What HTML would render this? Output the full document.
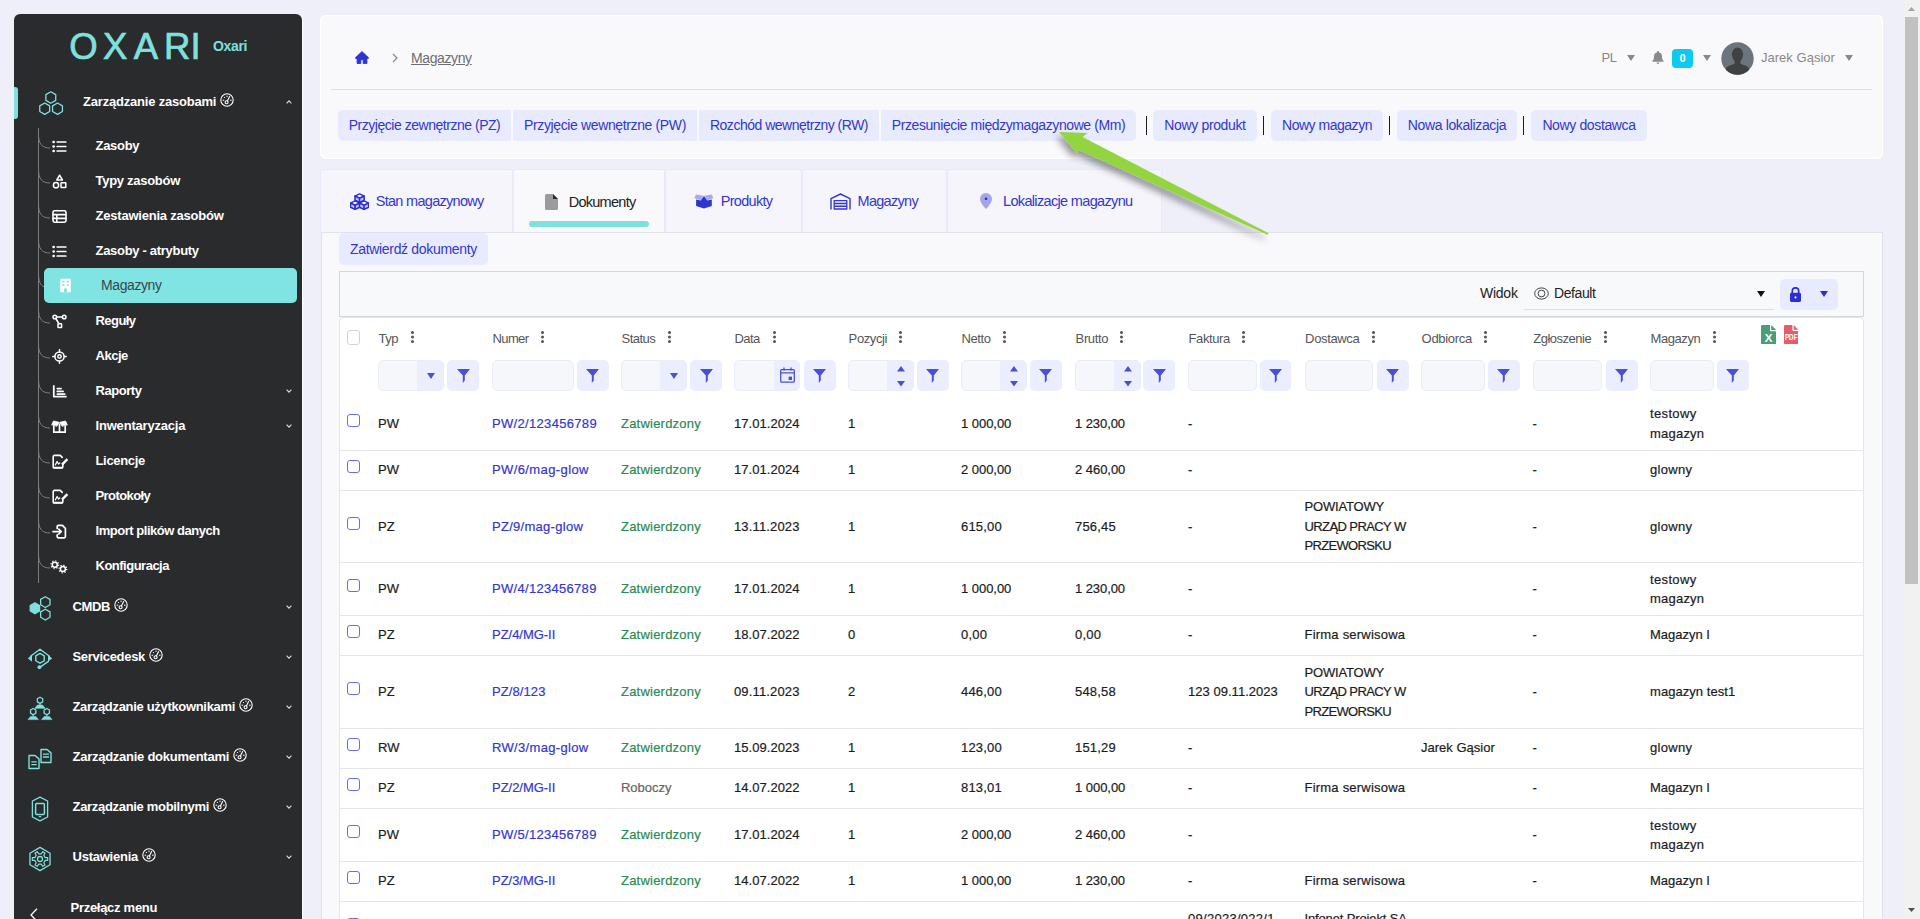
<!DOCTYPE html>
<html lang="pl">
<head>
<meta charset="utf-8">
<title>Magazyny - Oxari</title>
<style>
*{box-sizing:border-box;margin:0;padding:0}
html,body{width:1920px;height:919px;overflow:hidden}
body{background:#eeeff8;font-family:"Liberation Sans",sans-serif;font-size:13px;color:#222;position:relative}
a{text-decoration:none;color:inherit}
.abs{position:absolute}
/* ---------- sidebar ---------- */
#sidebar{position:absolute;left:14px;top:14px;width:288px;height:920px;background:#2a2b2d;border-radius:6px 6px 0 0;color:#fff;box-shadow:1px 0 0 #fff}
#logo{position:absolute;left:55px;top:15px}
#brand{position:absolute;left:199px;top:24px;font-weight:bold;font-size:14px;letter-spacing:-.35px;color:#7fe0dd;line-height:16px}
.mi{position:absolute;left:0;width:288px;height:50px}
.mi .ic{position:absolute;left:12px;top:12.5px;width:28px;height:28px}
.mi .tx{position:absolute;left:58.5px;top:16px;font-weight:bold;font-size:13px;line-height:16px;white-space:nowrap}
.mi .tx svg{vertical-align:-1px;margin-left:4px}
.mi.first .ic{left:23px;top:11.500px}.mi.first .tx{left:69px}
.mi .chev{position:absolute;left:272px;top:23px;width:6px;height:4px}
.si{position:absolute;left:30px;width:253px;height:35px}
.si .ic{position:absolute;left:8px;top:10px;width:15px;height:15px}
.si .tx{position:absolute;left:51.5px;top:9px;font-weight:bold;font-size:13px;letter-spacing:-.22px;line-height:16px;white-space:nowrap}
.si .chev{position:absolute;left:242px;top:15px;width:6px;height:4px}
.si.act{background:#80e5e2;border-radius:5px;height:35px}
.si.act .tx{font-weight:normal;color:#39474d;left:57px;font-size:14px;letter-spacing:-.4px}
.si.act .ic{left:14px}
/* ---------- top card ---------- */
#card{position:absolute;left:320px;top:15px;width:1563px;height:144px;background:#f9f9fc;border-radius:6px;box-shadow:inset 0 0 0 1px #fff}
#card .hr{position:absolute;left:11px;top:74px;width:1541px;height:1px;background:#dfe0e6}
.btn{position:absolute;top:95px;height:31px;background:#e7ebfd;color:#3437cc;font-size:14px;line-height:31px;text-align:center;white-space:nowrap;border-radius:5px;letter-spacing:-.45px}
.sep{position:absolute;top:101px;width:1px;height:19px;background:#1c1c1e}
.gray{color:#888}
/* ---------- tabs ---------- */
.tab{position:absolute;top:169px;height:64px;background:#f5f5fb;border:1px solid #e6eafb;border-bottom:none;border-radius:3px 3px 0 0;color:#3437cc;font-size:14px;letter-spacing:-.42px;white-space:nowrap}
.tab .tx{position:absolute;top:22px;line-height:18px;font-size:14.5px}
.tab svg{position:absolute}
.tab.on{background:#f9f9fc;color:#222;height:65px}
/* ---------- panel ---------- */
#panel{position:absolute;left:321px;top:232px;width:1562px;height:700px;background:#f9f9fc;border:1px solid #dfe2e8}
#tool{position:absolute;left:339px;top:271px;width:1525px;height:46px;border:1px solid #d3d7de;background:#f8f9fb}
#grid{position:absolute;left:339px;top:317px;width:1525px;height:620px;background:#fff;border:1px solid #e3e6ec;border-top:1px solid #dfe3ea;border-radius:5px 5px 0 0;overflow:hidden}
/* ---------- grid ---------- */
.th{position:absolute;top:11.5px;line-height:18px;font-size:13px;color:#55565a;letter-spacing:-.45px;white-space:nowrap}
.dots{position:absolute;top:13px;width:3px;height:3px;border-radius:50%;background:#55565a;box-shadow:0 4.5px 0 #55565a,0 9px 0 #55565a}
.cb{position:absolute;width:13px;height:13px;border:1px solid #6a6ee0;border-radius:3px;background:#fff}
.cb.hd{border-color:#cfd3dc;height:15px}
.fi{position:absolute;height:31px;background:#f6f7fb;border:1px solid #eaedf7;border-radius:5px;overflow:hidden}
.fb{position:absolute;top:-1px;right:-1px;bottom:-1px;background:#ebeefe}
.ff{position:absolute;width:31.5px;height:31px;background:#ebeefe;border-radius:5px;display:flex;align-items:center;justify-content:center}
.tr{position:absolute;left:0;width:1523px;border-bottom:1px solid #e4e6ea}
.td{position:absolute;top:0;bottom:0;display:flex;align-items:center;font-size:13px;line-height:19.5px;letter-spacing:.2px;white-space:nowrap;color:#1c1c1e;-webkit-text-stroke:.2px}
.lk{color:#3437d0}.ok{color:#2a8a55}.dr{color:#666}
/* ---------- scrollbar ---------- */
#sb{position:absolute;left:1903px;top:0;width:17px;height:919px;background:#f1f1f1}
#sb i{position:absolute;left:2px;top:17px;width:13px;height:567px;background:#c1c1c1}
</style>
</head>
<body>
<div id="sidebar">
<svg id="logo" width="140" height="34" viewBox="0 0 140 34"><text y="29.600" x="14.500 46.300 76.900 108.200 126.600" text-anchor="middle" font-family="Liberation Sans, sans-serif" font-size="36.500" fill="#7fe0dd" stroke="#7fe0dd" stroke-width=".7">OXARI</text></svg>
<div id="brand">Oxari</div>
<div class="abs" style="left:0;top:73px;width:4px;height:32px;background:#7fe0dd;border-radius:0 3px 3px 0"></div>
<svg class="abs" style="left:22px;top:112px" width="20" height="460" viewBox="0 0 20 460" fill="none" stroke="#7d7d80" stroke-width="1"><path d="M2.500 2V457"/><path d="M2.500 8C2.500 18 6 22 14 22"/><path d="M2.500 43C2.500 53 6 57 14 57"/><path d="M2.500 78C2.500 88 6 92 14 92"/><path d="M2.500 113C2.500 123 6 127 14 127"/><path d="M2.500 148C2.500 158 6 162 14 162"/><path d="M2.500 183C2.500 193 6 197 14 197"/><path d="M2.500 218C2.500 228 6 232 14 232"/><path d="M2.500 253C2.500 263 6 267 14 267"/><path d="M2.500 288C2.500 298 6 302 14 302"/><path d="M2.500 323C2.500 333 6 337 14 337"/><path d="M2.500 358C2.500 368 6 372 14 372"/><path d="M2.500 393C2.500 403 6 407 14 407"/><path d="M2.500 428C2.500 438 6 442 14 442"/></svg>
<div class="mi first" style="top:63px"><svg class="ic" viewBox="0 0 28 28" fill="none" stroke="#7fe0dd" stroke-width="1.3" stroke-linejoin="round"><polygon points="18.74,11.35 13.80,14.20 8.86,11.35 8.86,5.65 13.80,2.80 18.74,5.65"/><polygon points="12.64,22.55 7.70,25.40 2.76,22.55 2.76,16.85 7.70,14.00 12.64,16.85"/><polygon points="25.44,22.55 20.50,25.40 15.56,22.55 15.56,16.85 20.50,14.00 25.44,16.85"/></svg><span class="tx"><span style="letter-spacing:-0.20px">Zarządzanie zasobami</span><svg width="14" height="14" viewBox="0 0 14 14" fill="none" stroke="#fff" stroke-width="1.1"><circle cx="7" cy="7" r="6.2"/><circle cx="6.6" cy="9.2" r="1.5"/><path d="M7.4 8 9.6 3.6" stroke-linecap="round"/><path d="M3 7.2h.8M4.2 4.3l.5.5M7 3v.7M10.4 7.2h.8" stroke-width="1" stroke-linecap="round"/></svg></span><svg class="chev" viewBox="0 0 6 4" fill="none" stroke="#ddd" stroke-width="1.1"><path d="M.6 3.3 3 .8 5.4 3.3"/></svg></div>
<div class="mi" style="top:568px"><svg class="ic" viewBox="0 0 28 28" fill="none" stroke="#7fe0dd" stroke-width="1.3" stroke-linejoin="round"><polygon points="13.58,16.00 8.90,18.70 4.22,16.00 4.22,10.60 8.90,7.90 13.58,10.60" fill="#7fe0dd"/><polygon points="23.98,9.80 19.30,12.50 14.62,9.80 14.62,4.40 19.30,1.70 23.98,4.40"/><polygon points="23.98,22.30 19.30,25.00 14.62,22.30 14.62,16.90 19.30,14.20 23.98,16.90"/></svg><span class="tx"><span style="letter-spacing:-0.38px">CMDB</span><svg width="14" height="14" viewBox="0 0 14 14" fill="none" stroke="#fff" stroke-width="1.1"><circle cx="7" cy="7" r="6.2"/><circle cx="6.6" cy="9.2" r="1.5"/><path d="M7.4 8 9.6 3.6" stroke-linecap="round"/><path d="M3 7.2h.8M4.2 4.3l.5.5M7 3v.7M10.4 7.2h.8" stroke-width="1" stroke-linecap="round"/></svg></span><svg class="chev" viewBox="0 0 6 4" fill="none" stroke="#ddd" stroke-width="1.1"><path d="M.6.7 3 3.2 5.4.7"/></svg></div>
<div class="mi" style="top:618px"><svg class="ic" viewBox="0 0 28 28" fill="none" stroke="#7fe0dd" stroke-width="1.4" stroke-linejoin="round"><polygon points="18.24,15.75 14.00,18.20 9.76,15.75 9.76,10.85 14.00,8.40 18.24,10.85"/><path d="M4.800 12.600V11L14 4.200l9.200 6.800v1.600"/><path d="M1.800 13.300l4.200-3.400v6.800zM26.200 13.300l-4.200-3.400v6.800z" fill="#7fe0dd" stroke="none"/><path d="M22.400 16.400 14.800 21.600" stroke-linecap="round"/><circle cx="13.400" cy="22.200" r="1.900" fill="#7fe0dd" stroke="none"/></svg><span class="tx"><span style="letter-spacing:-0.31px">Servicedesk</span><svg width="14" height="14" viewBox="0 0 14 14" fill="none" stroke="#fff" stroke-width="1.1"><circle cx="7" cy="7" r="6.2"/><circle cx="6.6" cy="9.2" r="1.5"/><path d="M7.4 8 9.6 3.6" stroke-linecap="round"/><path d="M3 7.2h.8M4.2 4.3l.5.5M7 3v.7M10.4 7.2h.8" stroke-width="1" stroke-linecap="round"/></svg></span><svg class="chev" viewBox="0 0 6 4" fill="none" stroke="#ddd" stroke-width="1.1"><path d="M.6.7 3 3.2 5.4.7"/></svg></div>
<div class="mi" style="top:668px"><svg class="ic" viewBox="0 0 28 28" fill="none" stroke="#7fe0dd" stroke-width="1.3" stroke-linejoin="round"><polygon points="16.68,6.85 14.00,8.40 11.32,6.85 11.32,3.75 14.00,2.20 16.68,3.75"/><path d="M14 8.4v1.6"/><path d="M8.8 13.3l2.6-3.2h5.2l2.6 3.2z" fill="#7fe0dd" stroke-width=".6"/><polygon points="9.88,18.15 7.20,19.70 4.52,18.15 4.52,15.05 7.20,13.50 9.88,15.05"/><path d="M7.2 19.700000000000003v1.6"/><path d="M2.0 24.6l2.6-3.2h5.2l2.6 3.2z" fill="#7fe0dd" stroke-width=".6"/><polygon points="23.48,18.15 20.80,19.70 18.12,18.15 18.12,15.05 20.80,13.50 23.48,15.05"/><path d="M20.8 19.700000000000003v1.6"/><path d="M15.600000000000001 24.6l2.6-3.2h5.2l2.6 3.2z" fill="#7fe0dd" stroke-width=".6"/></svg><span class="tx"><span style="letter-spacing:-0.32px">Zarządzanie użytkownikami</span><svg width="14" height="14" viewBox="0 0 14 14" fill="none" stroke="#fff" stroke-width="1.1"><circle cx="7" cy="7" r="6.2"/><circle cx="6.6" cy="9.2" r="1.5"/><path d="M7.4 8 9.6 3.6" stroke-linecap="round"/><path d="M3 7.2h.8M4.2 4.3l.5.5M7 3v.7M10.4 7.2h.8" stroke-width="1" stroke-linecap="round"/></svg></span><svg class="chev" viewBox="0 0 6 4" fill="none" stroke="#ddd" stroke-width="1.1"><path d="M.6.7 3 3.2 5.4.7"/></svg></div>
<div class="mi" style="top:718px"><svg class="ic" viewBox="0 0 28 28" fill="none" stroke="#7fe0dd" stroke-width="1.4" stroke-linejoin="round"><path d="M15 4.5h6l4 3.4v9.6h-10z"/><path d="M3 10.5h6l4 3.4v9.6H3z"/><path d="M17 9.2h6M17 12h6M5.3 16.8h5.4M5.3 19.6h5.4" stroke-width="1.3"/></svg><span class="tx"><span style="letter-spacing:-0.26px">Zarządzanie dokumentami</span><svg width="14" height="14" viewBox="0 0 14 14" fill="none" stroke="#fff" stroke-width="1.1"><circle cx="7" cy="7" r="6.2"/><circle cx="6.6" cy="9.2" r="1.5"/><path d="M7.4 8 9.6 3.6" stroke-linecap="round"/><path d="M3 7.2h.8M4.2 4.3l.5.5M7 3v.7M10.4 7.2h.8" stroke-width="1" stroke-linecap="round"/></svg></span><svg class="chev" viewBox="0 0 6 4" fill="none" stroke="#ddd" stroke-width="1.1"><path d="M.6.7 3 3.2 5.4.7"/></svg></div>
<div class="mi" style="top:768px"><svg class="ic" viewBox="0 0 28 28" fill="none" stroke="#7fe0dd" stroke-width="1.3" stroke-linejoin="round"><path d="M14 2.2 21.6 6v16L14 25.8 6.4 22V6z"/><rect x="9.6" y="8.4" width="8.8" height="11" rx="1" stroke-width="1.5"/><path d="M12.8 21.6h2.4" stroke-width="1.2"/></svg><span class="tx"><span style="letter-spacing:-0.31px">Zarządzanie mobilnymi</span><svg width="14" height="14" viewBox="0 0 14 14" fill="none" stroke="#fff" stroke-width="1.1"><circle cx="7" cy="7" r="6.2"/><circle cx="6.6" cy="9.2" r="1.5"/><path d="M7.4 8 9.6 3.6" stroke-linecap="round"/><path d="M3 7.2h.8M4.2 4.3l.5.5M7 3v.7M10.4 7.2h.8" stroke-width="1" stroke-linecap="round"/></svg></span><svg class="chev" viewBox="0 0 6 4" fill="none" stroke="#ddd" stroke-width="1.1"><path d="M.6.7 3 3.2 5.4.7"/></svg></div>
<div class="mi" style="top:818px"><svg class="ic" viewBox="0 0 28 28" fill="none" stroke="#7fe0dd" stroke-width="1.3" stroke-linejoin="round"><polygon points="24.05,19.80 14.00,25.60 3.95,19.80 3.95,8.20 14.00,2.40 24.05,8.20"/><polygon points="19.22,12.60 21.69,12.70 21.69,15.30 19.22,15.40 17.82,17.82 18.97,20.01 16.72,21.31 15.40,19.22 12.60,19.22 11.28,21.31 9.03,20.01 10.18,17.82 8.78,15.40 6.31,15.30 6.31,12.70 8.78,12.60 10.18,10.18 9.03,7.99 11.28,6.69 12.60,8.78 15.40,8.78 16.72,6.69 18.97,7.99 17.82,10.18" stroke-width="1.2"/><circle cx="14" cy="14" r="2.5"/></svg><span class="tx"><span style="letter-spacing:-0.24px">Ustawienia</span><svg width="14" height="14" viewBox="0 0 14 14" fill="none" stroke="#fff" stroke-width="1.1"><circle cx="7" cy="7" r="6.2"/><circle cx="6.6" cy="9.2" r="1.5"/><path d="M7.4 8 9.6 3.6" stroke-linecap="round"/><path d="M3 7.2h.8M4.2 4.3l.5.5M7 3v.7M10.4 7.2h.8" stroke-width="1" stroke-linecap="round"/></svg></span><svg class="chev" viewBox="0 0 6 4" fill="none" stroke="#ddd" stroke-width="1.1"><path d="M.6.7 3 3.2 5.4.7"/></svg></div>
<div class="si" style="top:114.5px"><svg class="ic" viewBox="0 0 15 15" fill="none" stroke="#fff" stroke-width="1.7" stroke-linecap="round" stroke-linejoin="round"><path d="M5.2 3h8.6M5.2 7.5h8.6M5.2 12h8.6"/><path d="M1.6 3h.1M1.6 7.5h.1M1.6 12h.1" stroke-width="2.6"/></svg><span class="tx" style="letter-spacing:-0.29px">Zasoby</span></div>
<div class="si" style="top:149.5px"><svg class="ic" viewBox="0 0 15 15" fill="none" stroke="#fff" stroke-width="1.7" stroke-linecap="round" stroke-linejoin="round" style="stroke-width:1.5"><path d="M7.6 1.2 10.4 6H4.8z"/><circle cx="4" cy="11.2" r="2.6"/><rect x="9" y="8.8" width="4.8" height="4.8" rx=".5"/></svg><span class="tx" style="letter-spacing:-0.28px">Typy zasobów</span></div>
<div class="si" style="top:184.5px"><svg class="ic" viewBox="0 0 15 15" fill="none" stroke="#fff" stroke-width="1.7" stroke-linecap="round" stroke-linejoin="round" style="stroke-width:1.6"><rect x="1" y="1.8" width="13" height="11.4" rx="1.6"/><path d="M1 5.6h13M1 9.4h13M4.8 5.6v7.6"/></svg><span class="tx" style="letter-spacing:-0.21px">Zestawienia zasobów</span></div>
<div class="si" style="top:219.5px"><svg class="ic" viewBox="0 0 15 15" fill="none" stroke="#fff" stroke-width="1.7" stroke-linecap="round" stroke-linejoin="round"><path d="M5.2 3h8.6M5.2 7.5h8.6M5.2 12h8.6"/><path d="M1.6 3h.1M1.6 7.5h.1M1.6 12h.1" stroke-width="2.6"/></svg><span class="tx" style="letter-spacing:-0.30px">Zasoby - atrybuty</span></div>
<div class="si act" style="top:254px"><svg class="ic" viewBox="0 0 15 15" fill="#fff"><path d="M3.2.8h8.6a1 1 0 0 1 1 1v12.4H2.200V1.800a1 1 0 0 1 1-1z"/><g fill="#80e5e2"><rect x="4.400" y="2.800" width="1.900" height="1.900"/><rect x="8.700" y="2.800" width="1.900" height="1.900"/><rect x="4.400" y="6.200" width="1.900" height="1.900"/><rect x="8.700" y="6.200" width="1.900" height="1.900"/><path d="M6 14.200v-3l1.500-1.600L9 11.200v3z"/></g></svg><span class="tx" style="letter-spacing:-0.41px">Magazyny</span></div>
<div class="si" style="top:289.5px"><svg class="ic" viewBox="0 0 15 15" fill="none" stroke="#fff" stroke-width="1.7" stroke-linecap="round" stroke-linejoin="round" style="stroke-width:1.5"><circle cx="2.800" cy="3" r="1.800"/><circle cx="12.200" cy="3" r="1.800"/><rect x="6" y="9.800" width="3.600" height="3.600" rx=".5"/><path d="M4.600 3h5.800M3.800 4.500l3 5"/></svg><span class="tx" style="letter-spacing:-0.56px">Reguły</span></div>
<div class="si" style="top:324.5px"><svg class="ic" viewBox="0 0 15 15" fill="none" stroke="#fff" stroke-width="1.7" stroke-linecap="round" stroke-linejoin="round" style="stroke-width:1.5"><circle cx="7.500" cy="7.500" r="4.600"/><circle cx="7.500" cy="7.500" r="1.700"/><path d="M7.500.8v2M7.500 12.200v2M.8 7.500h2M12.200 7.500h2"/></svg><span class="tx" style="letter-spacing:-0.46px">Akcje</span></div>
<div class="si" style="top:359.5px"><svg class="ic" viewBox="0 0 15 15" fill="none" stroke="#fff" stroke-width="1.7" stroke-linecap="round" stroke-linejoin="round" style="stroke-width:1.8"><path d="M1.800 2v10.600h12.200"/><path d="M5.200 4.600h4M5.200 7.400h6M5.200 10.100h7.600" stroke-width="1.600"/></svg><span class="tx" style="letter-spacing:-0.45px">Raporty</span><svg class="chev" viewBox="0 0 6 4" fill="none" stroke="#ddd" stroke-width="1.1"><path d="M.6.7 3 3.2 5.4.7"/></svg></div>
<div class="si" style="top:394.5px"><svg class="ic" viewBox="0 0 17 15" fill="none" stroke="#fff" stroke-width="1.7" stroke-linecap="round" stroke-linejoin="round" style="stroke-width:1.700;width:17px;left:7px"><path d="M.8 5.600 2.500 2l5.700 1.300L6 7zM16.200 5.600 14.500 2 8.800 3.300 11 7z" fill="#fff" stroke-width=".8"/><path d="M2.800 7.400v5.800h11.400V7.400M8.500 5v8"/></svg><span class="tx" style="letter-spacing:-0.19px">Inwentaryzacja</span><svg class="chev" viewBox="0 0 6 4" fill="none" stroke="#ddd" stroke-width="1.1"><path d="M.6.7 3 3.2 5.4.7"/></svg></div>
<div class="si" style="top:429.5px"><svg class="ic" viewBox="0 0 17 15" fill="none" stroke="#fff" stroke-width="1.7" stroke-linecap="round" stroke-linejoin="round" style="stroke-width:1.600;width:17px"><path d="M10.800 10.600v2.200a1.200 1.200 0 0 1-1.200 1.200H2.400a1.200 1.200 0 0 1-1.200-1.200V2.600a1.200 1.200 0 0 1 1.200-1.200h5.800l2 2"/><path d="M3.400 10.800l1.700-3.300 1.400 2.500 1.200-1" stroke-width="1.300"/><path d="M15.400 5.200 10 10.600" stroke-width="2.400" stroke-linecap="butt"/><path d="M1.600 13.600h8.800" stroke-width="1.800"/></svg><span class="tx" style="letter-spacing:-0.33px">Licencje</span></div>
<div class="si" style="top:464.5px"><svg class="ic" viewBox="0 0 17 15" fill="none" stroke="#fff" stroke-width="1.7" stroke-linecap="round" stroke-linejoin="round" style="stroke-width:1.600;width:17px"><path d="M10.800 10.600v2.200a1.200 1.200 0 0 1-1.200 1.200H2.400a1.200 1.200 0 0 1-1.200-1.200V2.600a1.200 1.200 0 0 1 1.200-1.200h5.800l2 2"/><path d="M3.400 10.800l1.700-3.300 1.400 2.500 1.200-1" stroke-width="1.300"/><path d="M15.400 5.200 10 10.600" stroke-width="2.400" stroke-linecap="butt"/><path d="M1.600 13.600h8.800" stroke-width="1.800"/></svg><span class="tx" style="letter-spacing:-0.59px">Protokoły</span></div>
<div class="si" style="top:499.5px"><svg class="ic" viewBox="0 0 15 15" fill="none" stroke="#fff" stroke-width="1.7" stroke-linecap="round" stroke-linejoin="round" style="stroke-width:1.700"><path d="M5.200 4.400V2.600a1.200 1.200 0 0 1 1.200-1.200h4l3 3v8.200a1.200 1.200 0 0 1-1.200 1.200H6.400a1.200 1.200 0 0 1-1.200-1.200v-1.800"/><path d="M1 7.600h8M6.800 5.200l2.400 2.400-2.400 2.400"/></svg><span class="tx" style="letter-spacing:-0.47px">Import plików danych</span></div>
<div class="si" style="top:534.5px"><svg class="ic" viewBox="0 0 17 15" fill="none" stroke="#fff" style="width:17px;left:7px;overflow:visible"><circle cx="3.8" cy="5.7" r="2.500" stroke-width="1.500"/><circle cx="3.8" cy="5.7" r="3.800" stroke-dasharray="1.200 1.784" stroke-width="1.300"/><circle cx="11.9" cy="10" r="2.500" stroke-width="1.500"/><circle cx="11.9" cy="10" r="3.800" stroke-dasharray="1.200 1.784" stroke-width="1.300"/></svg><span class="tx" style="letter-spacing:-0.50px">Konfiguracja</span></div>
<div class="mi" style="top:868px"><svg class="abs" style="left:16px;top:26px" width="8" height="14" viewBox="0 0 8 14" fill="none" stroke="#fff" stroke-width="1.300"><path d="M7 .8 1 7l6 6.200"/></svg><span class="tx" style="left:56.500px;top:18px;letter-spacing:-0.28px">Przełącz menu</span></div>
</div>
<div id="card">
<svg class="abs" style="left:35px;top:36px" width="14" height="13.400" viewBox="0 0 14 13.400"><path d="M7 .6 13.400 6.600v.8h-1.500v5.200H8.200V8.700H5.800v3.900H2.100V7.400H.6v-.8z" fill="#2b35d2" stroke="#2b35d2" stroke-width=".9" stroke-linejoin="round"/></svg>
<svg class="abs" style="left:72px;top:38px" width="6" height="10" viewBox="0 0 6 10" fill="none" stroke="#888" stroke-width="1.200"><path d="M1 1l4 4-4 4"/></svg>
<a class="abs" style="left:91px;top:34px;font-size:14px;letter-spacing:-0.39px;line-height:18px;color:#6c6c72;text-decoration:underline">Magazyny</a>
<span class="abs gray" style="left:1281.5px;top:34px;font-size:13px;line-height:18px;letter-spacing:-.3px">PL</span>
<svg class="abs" style="left:1307px;top:40px" width="8" height="6" viewBox="0 0 8 6"><path d="M0 0h8L4 6z" fill="#888"/></svg>
<svg class="abs" style="left:1332px;top:36px" width="12" height="13" viewBox="0 0 12 13" fill="#8a8a8e"><path d="M6 0a1 1 0 0 1 1 1v.4a4 4 0 0 1 3 3.900c0 2.700.6 3.800 1.600 4.700.3.300.1.800-.3.800H.7c-.4 0-.6-.5-.3-.8C1.400 9.100 2 8 2 5.300a4 4 0 0 1 3-3.900V1a1 1 0 0 1 1-1zM4.600 11.600h2.800a1.400 1.400 0 0 1-2.800 0z"/></svg>
<span class="abs" style="left:1352px;top:34px;width:21px;height:19px;background:#0dcaf0;border-radius:4px;color:#fff;font-weight:bold;font-size:11px;line-height:19px;text-align:center">0</span>
<svg class="abs" style="left:1383px;top:40px" width="8" height="6" viewBox="0 0 8 6"><path d="M0 0h8L4 6z" fill="#888"/></svg>
<svg class="abs" style="left:1401px;top:27px" width="33" height="33" viewBox="0 0 33 33"><defs><clipPath id="av"><circle cx="16.500" cy="16.500" r="16.200"/></clipPath></defs><circle cx="16.500" cy="16.500" r="16.200" fill="#6c757d"/><g clip-path="url(#av)" fill="#404142"><ellipse cx="16.500" cy="12.600" rx="5.600" ry="7.200"/><path d="M13.500 17.500h6v4.200c3 1.200 7 2.300 8.500 4.300v7H5v-7c1.500-2 5.500-3.100 8.500-4.300z"/></g></svg>
<span class="abs gray" style="left:1441px;top:34px;font-size:13px;line-height:18px;letter-spacing:0.02px;white-space:nowrap">Jarek Gąsior</span>
<svg class="abs" style="left:1525px;top:40px" width="8" height="6" viewBox="0 0 8 6"><path d="M0 0h8L4 6z" fill="#888"/></svg>
<div class="hr"></div>
<a class="btn" style="left:18px;width:173px;border-radius:5px 0 0 5px;letter-spacing:-0.47px">Przyjęcie zewnętrzne (PZ)</a>
<a class="btn" style="left:193px;width:184px;border-radius:0;letter-spacing:-0.37px">Przyjęcie wewnętrzne (PW)</a>
<a class="btn" style="left:379px;width:180px;border-radius:0;letter-spacing:-0.49px">Rozchód wewnętrzny (RW)</a>
<a class="btn" style="left:561px;width:255px;border-radius:0 5px 5px 0;letter-spacing:-0.41px">Przesunięcie międzymagazynowe (Mm)</a>
<i class="sep" style="left:826px"></i>
<a class="btn" style="left:833px;width:104px;letter-spacing:-0.36px">Nowy produkt</a>
<i class="sep" style="left:943px"></i>
<a class="btn" style="left:951px;width:112px;letter-spacing:-0.48px">Nowy magazyn</a>
<i class="sep" style="left:1069px"></i>
<a class="btn" style="left:1077px;width:120px;letter-spacing:-0.37px">Nowa lokalizacja</a>
<i class="sep" style="left:1203px"></i>
<a class="btn" style="left:1211px;width:116px;letter-spacing:-0.37px">Nowy dostawca</a>
</div>
<div class="tab" style="left:320px;width:193px">
<svg style="left:28.500px;top:22.500px" width="19" height="17" viewBox="0 0 19 17" fill="#c3c6f5" stroke="#2c2fd0" stroke-width="1.500" stroke-linejoin="round"><path d="M9.6 0.9 14.2 3.1 9.6 5.3 5.0 3.1z" fill="#fff"/><path d="M5.0 3.1 9.6 5.3V9.4L5.0 7.2z"/><path d="M14.2 3.1 9.6 5.3V9.4L14.2 7.2z"/><path d="M5.1 7.9 9.7 10.1 5.1 12.3 0.5 10.1z" fill="#fff"/><path d="M0.5 10.1 5.1 12.3V16.4L0.5 14.2z"/><path d="M9.7 10.1 5.1 12.3V16.4L9.7 14.2z"/><path d="M14.1 7.9 18.7 10.1 14.1 12.3 9.5 10.1z" fill="#fff"/><path d="M9.5 10.1 14.1 12.3V16.4L9.5 14.2z"/><path d="M18.7 10.1 14.1 12.3V16.4L18.7 14.2z"/></svg>
<span class="tx" style="left:54.7px;letter-spacing:-0.70px">Stan magazynowy</span></div>
<div class="tab on" style="left:513px;width:152px">
<svg style="left:31px;top:24px" width="13" height="16" viewBox="0 0 13 16"><path d="M1.600 0H8l5 5v9.400A1.600 1.600 0 0 1 11.400 16H1.600A1.600 1.600 0 0 1 0 14.400V1.600A1.600 1.600 0 0 1 1.600 0z" fill="#9b9b9e"/><path d="M8 0l5 5H8z" fill="#2a2a2c"/></svg>
<span class="tx" style="left:54.7px;top:23px;letter-spacing:-0.73px">Dokumenty</span>
<i class="abs" style="left:15px;top:51px;width:120px;height:6px;border-radius:3px;background:#80e0dc"></i></div>
<div class="tab" style="left:665px;width:137px">
<svg style="left:28px;top:23.500px" width="20" height="15" viewBox="0 0 20 15"><path d="M.3 3.900 2.100.5l7.400 1.300-2.800 4.400zM19.300 3.900 17.800.5l-7.500 1.300 2.900 4.400z" fill="#a6a9ea"/><path d="M2.100 5.500l4.600 1L10 2l3.200 4.500 4.600-1v6.600L10 14.400l-7.900-2.300z" fill="#2b36d1"/></svg>
<span class="tx" style="left:54.7px;letter-spacing:-0.69px">Produkty</span></div>
<div class="tab" style="left:802px;width:145px">
<svg style="left:27px;top:23px" width="21" height="17" viewBox="0 0 21 17" fill="none" stroke="#3437cc" stroke-width="1.400" stroke-linejoin="round"><path d="M1 16.500V5.600L10.500 1 20 5.600v10.900"/><path d="M4.200 16.500V7.600h12.600v8.900" stroke-width="1.300"/><path d="M4.200 10.400h12.600M4.200 13.200h12.600M4.200 16h12.600" stroke-width="1.500"/></svg>
<span class="tx" style="left:54.5px;letter-spacing:-0.70px">Magazyny</span></div>
<div class="tab" style="left:947px;width:215px">
<svg style="left:32px;top:23px" width="12" height="16" viewBox="0 0 12 16"><path d="M6 0a6 6 0 0 1 6 6c0 4-6 10-6 10S0 10 0 6a6 6 0 0 1 6-6z" fill="#a3a6ea"/><circle cx="6" cy="5.800" r="1.300" fill="#2a2db8"/></svg>
<span class="tx" style="left:55px;letter-spacing:-0.66px">Lokalizacje magazynu</span></div>
<div id="panel"></div>
<a class="btn" style="left:339px;top:233px;width:149px;height:32px;line-height:32px;letter-spacing:-0.32px">Zatwierdź dokumenty</a>
<div id="tool">
<span class="abs" style="left:1140px;top:12px;font-size:14px;line-height:18px;letter-spacing:-.25px">Widok</span>
<i class="abs" style="left:1184px;top:37px;width:250px;height:1px;background:#dcdfe6"></i>
<svg class="abs" style="left:1194px;top:15px" width="15" height="13" viewBox="0 0 15 13" fill="none" stroke="#444" stroke-width="1"><ellipse cx="7.500" cy="6.500" rx="6.800" ry="5.600"/><circle cx="7.500" cy="6.500" r="3.400"/></svg>
<span class="abs" style="left:1214px;top:12px;font-size:14px;line-height:18px;letter-spacing:-.4px">Default</span>
<svg class="abs" style="left:1417px;top:19px" width="8" height="6" viewBox="0 0 8 6"><path d="M0 0h8L4 6z" fill="#111"/></svg>
<div class="abs" style="left:1440px;top:7px;width:58px;height:31px;background:#e7ebfd;border-radius:5px"><svg class="abs" style="left:10px;top:8px" width="11" height="15" viewBox="0 0 11 15"><path d="M2.300 6V4a3.200 3.200 0 0 1 6.400 0v2" fill="none" stroke="#2b2fd2" stroke-width="1.700"/><rect x="0" y="5.800" width="11" height="9.200" rx="1.400" fill="#2b2fd2"/><circle cx="5.500" cy="10.400" r="1.100" fill="#e7ebfd"/></svg><svg class="abs" style="left:40px;top:12px" width="8" height="6" viewBox="0 0 8 6"><path d="M0 0h8L4 6z" fill="#2b2fd2"/></svg></div>
</div>
<div id="grid">
<i class="cb hd" style="left:7px;top:11.5px"></i>
<span class="th" style="left:38.6px;letter-spacing:-0.59px">Typ</span><i class="dots" style="left:71px"></i>
<div class="fi" style="left:38px;top:42px;width:66px"><i class="fb" style="left:38px"></i>
<svg class="abs" style="left:48px;top:12px" width="8" height="6" viewBox="0 0 8 6"><path d="M0 0h8L4 6z" fill="#4a50d6"/></svg>
</div>
<div class="ff" style="left:107.3px;top:42px"><svg width="13" height="14" viewBox="0 0 13 14"><path d="M0 0h13L7.800 6.400v5.200L5.800 14V6.400z" fill="#4a50d6"/></svg></div>
<span class="th" style="left:152.6px;letter-spacing:-0.64px">Numer</span><i class="dots" style="left:200.8px"></i>
<div class="fi" style="left:152px;top:42px;width:82px"></div>
<div class="ff" style="left:237.2px;top:42px"><svg width="13" height="14" viewBox="0 0 13 14"><path d="M0 0h13L7.800 6.400v5.200L5.800 14V6.400z" fill="#4a50d6"/></svg></div>
<span class="th" style="left:281.6px;letter-spacing:-0.53px">Status</span><i class="dots" style="left:327.9px"></i>
<div class="fi" style="left:281px;top:42px;width:66px"><i class="fb" style="left:38px"></i>
<svg class="abs" style="left:48px;top:12px" width="8" height="6" viewBox="0 0 8 6"><path d="M0 0h8L4 6z" fill="#4a50d6"/></svg>
</div>
<div class="ff" style="left:350.3px;top:42px"><svg width="13" height="14" viewBox="0 0 13 14"><path d="M0 0h13L7.800 6.400v5.200L5.800 14V6.400z" fill="#4a50d6"/></svg></div>
<span class="th" style="left:394.6px;letter-spacing:-0.62px">Data</span><i class="dots" style="left:433.1px"></i>
<div class="fi" style="left:394px;top:42px;width:66px"><i class="fb" style="left:39px"></i>
<svg class="abs" style="left:45px;top:6px" width="15" height="16" viewBox="0 0 15 16" fill="none" stroke="#4a50d6" stroke-width="1.300"><rect x=".7" y="2.600" width="13.600" height="12.600" rx="1"/><path d="M.7 5.800h13.600M4 .4v3M11 .4v3"/><rect x="8.600" y="9.600" width="3.400" height="3.400" fill="#4a50d6" stroke="none"/></svg>
</div>
<div class="ff" style="left:464px;top:42px"><svg width="13" height="14" viewBox="0 0 13 14"><path d="M0 0h13L7.800 6.400v5.200L5.800 14V6.400z" fill="#4a50d6"/></svg></div>
<span class="th" style="left:508.6px;letter-spacing:-0.38px">Pozycji</span><i class="dots" style="left:559.1px"></i>
<div class="fi" style="left:508px;top:42px;width:66px"><i class="fb" style="left:38px"></i>
<svg class="abs" style="left:48px;top:5px" width="8" height="21" viewBox="0 0 8 21"><path d="M0 5.500h8L4 0zM0 15h8l-4 5.500z" fill="#4a50d6"/></svg>
</div>
<div class="ff" style="left:577px;top:42px"><svg width="13" height="14" viewBox="0 0 13 14"><path d="M0 0h13L7.800 6.400v5.200L5.800 14V6.400z" fill="#4a50d6"/></svg></div>
<span class="th" style="left:621.6px;letter-spacing:-0.42px">Netto</span><i class="dots" style="left:662.9px"></i>
<div class="fi" style="left:621px;top:42px;width:66px"><i class="fb" style="left:38px"></i>
<svg class="abs" style="left:48px;top:5px" width="8" height="21" viewBox="0 0 8 21"><path d="M0 5.500h8L4 0zM0 15h8l-4 5.500z" fill="#4a50d6"/></svg>
</div>
<div class="ff" style="left:690.2px;top:42px"><svg width="13" height="14" viewBox="0 0 13 14"><path d="M0 0h13L7.800 6.400v5.200L5.800 14V6.400z" fill="#4a50d6"/></svg></div>
<span class="th" style="left:735.6px;letter-spacing:-0.38px">Brutto</span><i class="dots" style="left:780px"></i>
<div class="fi" style="left:735px;top:42px;width:66px"><i class="fb" style="left:38px"></i>
<svg class="abs" style="left:48px;top:5px" width="8" height="21" viewBox="0 0 8 21"><path d="M0 5.500h8L4 0zM0 15h8l-4 5.500z" fill="#4a50d6"/></svg>
</div>
<div class="ff" style="left:803.3px;top:42px"><svg width="13" height="14" viewBox="0 0 13 14"><path d="M0 0h13L7.800 6.400v5.200L5.800 14V6.400z" fill="#4a50d6"/></svg></div>
<span class="th" style="left:848.6px;letter-spacing:-0.41px">Faktura</span><i class="dots" style="left:901.8px"></i>
<div class="fi" style="left:848px;top:42px;width:69px"></div>
<div class="ff" style="left:919.8px;top:42px"><svg width="13" height="14" viewBox="0 0 13 14"><path d="M0 0h13L7.800 6.400v5.200L5.800 14V6.400z" fill="#4a50d6"/></svg></div>
<span class="th" style="left:965.1px;letter-spacing:-0.35px">Dostawca</span><i class="dots" style="left:1032px"></i>
<div class="fi" style="left:964.5px;top:42px;width:68.5px"></div>
<div class="ff" style="left:1037px;top:42px"><svg width="13" height="14" viewBox="0 0 13 14"><path d="M0 0h13L7.800 6.400v5.200L5.800 14V6.400z" fill="#4a50d6"/></svg></div>
<span class="th" style="left:1081.6px;letter-spacing:-0.31px">Odbiorca</span><i class="dots" style="left:1144px"></i>
<div class="fi" style="left:1081px;top:42px;width:63.5px"></div>
<div class="ff" style="left:1148px;top:42px"><svg width="13" height="14" viewBox="0 0 13 14"><path d="M0 0h13L7.800 6.400v5.200L5.800 14V6.400z" fill="#4a50d6"/></svg></div>
<span class="th" style="left:1193.2px;letter-spacing:-0.49px">Zgłoszenie</span><i class="dots" style="left:1264px"></i>
<div class="fi" style="left:1192.6px;top:42px;width:69.5px"></div>
<div class="ff" style="left:1266px;top:42px"><svg width="13" height="14" viewBox="0 0 13 14"><path d="M0 0h13L7.800 6.400v5.200L5.800 14V6.400z" fill="#4a50d6"/></svg></div>
<span class="th" style="left:1310.6px;letter-spacing:-0.44px">Magazyn</span><i class="dots" style="left:1372.9px"></i>
<div class="fi" style="left:1310px;top:42px;width:64px"></div>
<div class="ff" style="left:1377px;top:42px"><svg width="13" height="14" viewBox="0 0 13 14"><path d="M0 0h13L7.800 6.400v5.200L5.800 14V6.400z" fill="#4a50d6"/></svg></div>
<svg class="abs" style="left:1421px;top:7px" width="15.200" height="19.400" viewBox="0 0 15.200 19.400"><path d="M1.400 0H9v5.200a1 1 0 0 0 1 1h5.200v11.800a1.400 1.400 0 0 1-1.400 1.400H1.400A1.400 1.400 0 0 1 0 18V1.400A1.400 1.400 0 0 1 1.400 0z" fill="#4a9e76"/><path d="M10.200 0l5 5h-5z" fill="#4a9e76"/><text x="7.600" y="17" font-family="Liberation Sans, sans-serif" font-weight="bold" font-size="11.500" fill="#fff" text-anchor="middle">X</text></svg>
<svg class="abs" style="left:1443.7px;top:7px" width="14.400" height="19.400" viewBox="0 0 14.400 19.400"><path d="M1.400 0H8.400v5a1 1 0 0 0 1 1h5v12a1.400 1.400 0 0 1-1.400 1.400H1.400A1.400 1.400 0 0 1 0 18V1.400A1.400 1.400 0 0 1 1.400 0z" fill="#e35d6b"/><path d="M9.600 0l4.800 4.800H9.600z" fill="#e35d6b"/><text x="7.200" y="14.800" font-family="Liberation Sans, sans-serif" font-weight="bold" font-size="9" fill="#fff" text-anchor="middle" textLength="12.600" lengthAdjust="spacingAndGlyphs">PDF</text></svg>
<div class="tr" style="top:79px;height:54px">
<i class="cb" style="left:7px;top:16.5px"></i>
<div class="td" style="left:38px"><div>PW</div></div>
<div class="td" style="left:152px"><div><a class="lk"><span style="letter-spacing:0.32px">PW/2/123456789</span></a></div></div>
<div class="td" style="left:281px"><div><span class="ok"><span style="letter-spacing:0.22px">Zatwierdzony</span></span></div></div>
<div class="td" style="left:394px"><div><span style="letter-spacing:0.04px">17.01.2024</span></div></div>
<div class="td" style="left:508px"><div>1</div></div>
<div class="td" style="left:621px"><div><span style="letter-spacing:-0.04px">1 000,00</span></div></div>
<div class="td" style="left:735px"><div><span style="letter-spacing:-0.08px">1 230,00</span></div></div>
<div class="td" style="left:848px"><div>-</div></div>
<div class="td" style="left:1192.6px"><div>-</div></div>
<div class="td" style="left:1310px"><div><span style="letter-spacing:0.35px">testowy</span><br><span style="letter-spacing:0.22px">magazyn</span></div></div>
</div>
<div class="tr" style="top:133px;height:40px">
<i class="cb" style="left:7px;top:8.5px"></i>
<div class="td" style="left:38px;padding-bottom:1.5px"><div>PW</div></div>
<div class="td" style="left:152px;padding-bottom:1.5px"><div><a class="lk"><span style="letter-spacing:0.39px">PW/6/mag-glow</span></a></div></div>
<div class="td" style="left:281px;padding-bottom:1.5px"><div><span class="ok"><span style="letter-spacing:0.22px">Zatwierdzony</span></span></div></div>
<div class="td" style="left:394px;padding-bottom:1.5px"><div><span style="letter-spacing:0.04px">17.01.2024</span></div></div>
<div class="td" style="left:508px;padding-bottom:1.5px"><div>1</div></div>
<div class="td" style="left:621px;padding-bottom:1.5px"><div><span style="letter-spacing:-0.04px">2 000,00</span></div></div>
<div class="td" style="left:735px;padding-bottom:1.5px"><div><span style="letter-spacing:-0.04px">2 460,00</span></div></div>
<div class="td" style="left:848px;padding-bottom:1.5px"><div>-</div></div>
<div class="td" style="left:1192.6px;padding-bottom:1.5px"><div>-</div></div>
<div class="td" style="left:1310px;padding-bottom:1.5px"><div><span style="letter-spacing:0.29px">glowny</span></div></div>
</div>
<div class="tr" style="top:173px;height:72px">
<i class="cb" style="left:7px;top:25.5px"></i>
<div class="td" style="left:38px"><div>PZ</div></div>
<div class="td" style="left:152px"><div><a class="lk"><span style="letter-spacing:0.28px">PZ/9/mag-glow</span></a></div></div>
<div class="td" style="left:281px"><div><span class="ok"><span style="letter-spacing:0.22px">Zatwierdzony</span></span></div></div>
<div class="td" style="left:394px"><div><span style="letter-spacing:0.14px">13.11.2023</span></div></div>
<div class="td" style="left:508px"><div>1</div></div>
<div class="td" style="left:621px"><div>615,00</div></div>
<div class="td" style="left:735px"><div>756,45</div></div>
<div class="td" style="left:848px"><div>-</div></div>
<div class="td" style="left:964.5px"><div><span style="letter-spacing:-0.17px">POWIATOWY</span><br><span style="letter-spacing:-0.59px">URZĄD PRACY W</span><br><span style="letter-spacing:-0.68px">PRZEWORSKU</span></div></div>
<div class="td" style="left:1192.6px"><div>-</div></div>
<div class="td" style="left:1310px"><div><span style="letter-spacing:0.29px">glowny</span></div></div>
</div>
<div class="tr" style="top:245px;height:53px">
<i class="cb" style="left:7px;top:16px"></i>
<div class="td" style="left:38px"><div>PW</div></div>
<div class="td" style="left:152px"><div><a class="lk"><span style="letter-spacing:0.30px">PW/4/123456789</span></a></div></div>
<div class="td" style="left:281px"><div><span class="ok"><span style="letter-spacing:0.22px">Zatwierdzony</span></span></div></div>
<div class="td" style="left:394px"><div><span style="letter-spacing:0.04px">17.01.2024</span></div></div>
<div class="td" style="left:508px"><div>1</div></div>
<div class="td" style="left:621px"><div><span style="letter-spacing:-0.04px">1 000,00</span></div></div>
<div class="td" style="left:735px"><div><span style="letter-spacing:-0.08px">1 230,00</span></div></div>
<div class="td" style="left:848px"><div>-</div></div>
<div class="td" style="left:1192.6px"><div>-</div></div>
<div class="td" style="left:1310px"><div><span style="letter-spacing:0.35px">testowy</span><br><span style="letter-spacing:0.22px">magazyn</span></div></div>
</div>
<div class="tr" style="top:298px;height:40px">
<i class="cb" style="left:7px;top:8.5px"></i>
<div class="td" style="left:38px;padding-bottom:1.5px"><div>PZ</div></div>
<div class="td" style="left:152px;padding-bottom:1.5px"><div><a class="lk"><span style="letter-spacing:-0.03px">PZ/4/MG-II</span></a></div></div>
<div class="td" style="left:281px;padding-bottom:1.5px"><div><span class="ok"><span style="letter-spacing:0.22px">Zatwierdzony</span></span></div></div>
<div class="td" style="left:394px;padding-bottom:1.5px"><div><span style="letter-spacing:0.04px">18.07.2022</span></div></div>
<div class="td" style="left:508px;padding-bottom:1.5px"><div>0</div></div>
<div class="td" style="left:621px;padding-bottom:1.5px"><div>0,00</div></div>
<div class="td" style="left:735px;padding-bottom:1.5px"><div>0,00</div></div>
<div class="td" style="left:848px;padding-bottom:1.5px"><div>-</div></div>
<div class="td" style="left:964.5px;padding-bottom:1.5px"><div><span style="letter-spacing:0.22px">Firma serwisowa</span></div></div>
<div class="td" style="left:1192.6px;padding-bottom:1.5px"><div>-</div></div>
<div class="td" style="left:1310px;padding-bottom:1.5px"><div><span style="letter-spacing:-0.02px">Magazyn I</span></div></div>
</div>
<div class="tr" style="top:338px;height:73px">
<i class="cb" style="left:7px;top:26px"></i>
<div class="td" style="left:38px"><div>PZ</div></div>
<div class="td" style="left:152px"><div><a class="lk"><span style="letter-spacing:0.09px">PZ/8/123</span></a></div></div>
<div class="td" style="left:281px"><div><span class="ok"><span style="letter-spacing:0.22px">Zatwierdzony</span></span></div></div>
<div class="td" style="left:394px"><div><span style="letter-spacing:0.14px">09.11.2023</span></div></div>
<div class="td" style="left:508px"><div>2</div></div>
<div class="td" style="left:621px"><div>446,00</div></div>
<div class="td" style="left:735px"><div>548,58</div></div>
<div class="td" style="left:848px"><div><span style="letter-spacing:0.03px">123 09.11.2023</span></div></div>
<div class="td" style="left:964.5px"><div><span style="letter-spacing:-0.17px">POWIATOWY</span><br><span style="letter-spacing:-0.59px">URZĄD PRACY W</span><br><span style="letter-spacing:-0.68px">PRZEWORSKU</span></div></div>
<div class="td" style="left:1192.6px"><div>-</div></div>
<div class="td" style="left:1310px"><div><span style="letter-spacing:0.05px">magazyn test1</span></div></div>
</div>
<div class="tr" style="top:411px;height:40px">
<i class="cb" style="left:7px;top:8.5px"></i>
<div class="td" style="left:38px;padding-bottom:1.5px"><div>RW</div></div>
<div class="td" style="left:152px;padding-bottom:1.5px"><div><a class="lk"><span style="letter-spacing:0.33px">RW/3/mag-glow</span></a></div></div>
<div class="td" style="left:281px;padding-bottom:1.5px"><div><span class="ok"><span style="letter-spacing:0.22px">Zatwierdzony</span></span></div></div>
<div class="td" style="left:394px;padding-bottom:1.5px"><div><span style="letter-spacing:0.04px">15.09.2023</span></div></div>
<div class="td" style="left:508px;padding-bottom:1.5px"><div>1</div></div>
<div class="td" style="left:621px;padding-bottom:1.5px"><div>123,00</div></div>
<div class="td" style="left:735px;padding-bottom:1.5px"><div>151,29</div></div>
<div class="td" style="left:848px;padding-bottom:1.5px"><div>-</div></div>
<div class="td" style="left:1081px;padding-bottom:1.5px"><div><span style="letter-spacing:0.01px">Jarek Gąsior</span></div></div>
<div class="td" style="left:1192.6px;padding-bottom:1.5px"><div>-</div></div>
<div class="td" style="left:1310px;padding-bottom:1.5px"><div><span style="letter-spacing:0.29px">glowny</span></div></div>
</div>
<div class="tr" style="top:451px;height:40px">
<i class="cb" style="left:7px;top:8.5px"></i>
<div class="td" style="left:38px;padding-bottom:1.5px"><div>PZ</div></div>
<div class="td" style="left:152px;padding-bottom:1.5px"><div><a class="lk"><span style="letter-spacing:-0.03px">PZ/2/MG-II</span></a></div></div>
<div class="td" style="left:281px;padding-bottom:1.5px"><div><span class="dr"><span style="letter-spacing:-0.03px">Roboczy</span></span></div></div>
<div class="td" style="left:394px;padding-bottom:1.5px"><div><span style="letter-spacing:0.04px">14.07.2022</span></div></div>
<div class="td" style="left:508px;padding-bottom:1.5px"><div>1</div></div>
<div class="td" style="left:621px;padding-bottom:1.5px"><div>813,01</div></div>
<div class="td" style="left:735px;padding-bottom:1.5px"><div><span style="letter-spacing:-0.04px">1 000,00</span></div></div>
<div class="td" style="left:848px;padding-bottom:1.5px"><div>-</div></div>
<div class="td" style="left:964.5px;padding-bottom:1.5px"><div><span style="letter-spacing:0.22px">Firma serwisowa</span></div></div>
<div class="td" style="left:1192.6px;padding-bottom:1.5px"><div>-</div></div>
<div class="td" style="left:1310px;padding-bottom:1.5px"><div><span style="letter-spacing:-0.02px">Magazyn I</span></div></div>
</div>
<div class="tr" style="top:491px;height:53px">
<i class="cb" style="left:7px;top:16px"></i>
<div class="td" style="left:38px"><div>PW</div></div>
<div class="td" style="left:152px"><div><a class="lk"><span style="letter-spacing:0.30px">PW/5/123456789</span></a></div></div>
<div class="td" style="left:281px"><div><span class="ok"><span style="letter-spacing:0.22px">Zatwierdzony</span></span></div></div>
<div class="td" style="left:394px"><div><span style="letter-spacing:0.04px">17.01.2024</span></div></div>
<div class="td" style="left:508px"><div>1</div></div>
<div class="td" style="left:621px"><div><span style="letter-spacing:-0.04px">2 000,00</span></div></div>
<div class="td" style="left:735px"><div><span style="letter-spacing:-0.04px">2 460,00</span></div></div>
<div class="td" style="left:848px"><div>-</div></div>
<div class="td" style="left:1192.6px"><div>-</div></div>
<div class="td" style="left:1310px"><div><span style="letter-spacing:0.35px">testowy</span><br><span style="letter-spacing:0.22px">magazyn</span></div></div>
</div>
<div class="tr" style="top:544px;height:40px">
<i class="cb" style="left:7px;top:8.5px"></i>
<div class="td" style="left:38px;padding-bottom:1.5px"><div>PZ</div></div>
<div class="td" style="left:152px;padding-bottom:1.5px"><div><a class="lk"><span style="letter-spacing:-0.03px">PZ/3/MG-II</span></a></div></div>
<div class="td" style="left:281px;padding-bottom:1.5px"><div><span class="ok"><span style="letter-spacing:0.22px">Zatwierdzony</span></span></div></div>
<div class="td" style="left:394px;padding-bottom:1.5px"><div><span style="letter-spacing:0.04px">14.07.2022</span></div></div>
<div class="td" style="left:508px;padding-bottom:1.5px"><div>1</div></div>
<div class="td" style="left:621px;padding-bottom:1.5px"><div><span style="letter-spacing:-0.04px">1 000,00</span></div></div>
<div class="td" style="left:735px;padding-bottom:1.5px"><div><span style="letter-spacing:-0.08px">1 230,00</span></div></div>
<div class="td" style="left:848px;padding-bottom:1.5px"><div>-</div></div>
<div class="td" style="left:964.5px;padding-bottom:1.5px"><div><span style="letter-spacing:0.22px">Firma serwisowa</span></div></div>
<div class="td" style="left:1192.6px;padding-bottom:1.5px"><div>-</div></div>
<div class="td" style="left:1310px;padding-bottom:1.5px"><div><span style="letter-spacing:-0.02px">Magazyn I</span></div></div>
</div>
<div class="tr" style="top:584px;height:53px">
<i class="cb" style="left:7px;top:16px"></i>
<div class="td" style="left:38px"><div>PZ</div></div>
<div class="td" style="left:152px"><div><a class="lk"><span style="letter-spacing:-0.03px">PZ/7/MG-II</span></a></div></div>
<div class="td" style="left:281px"><div><span class="ok"><span style="letter-spacing:0.22px">Zatwierdzony</span></span></div></div>
<div class="td" style="left:394px"><div>27.09.2023</div></div>
<div class="td" style="left:508px"><div>1</div></div>
<div class="td" style="left:621px"><div>100,00</div></div>
<div class="td" style="left:735px"><div>123,00</div></div>
<div class="td" style="left:848px"><div><span style="letter-spacing:0.27px">09/2023/022/1</span><br>27.09.2023</div></div>
<div class="td" style="left:964.5px"><div><span style="letter-spacing:-0.14px">Infonet Projekt SA</span><br>&nbsp;</div></div>
<div class="td" style="left:1192.6px"><div>-</div></div>
<div class="td" style="left:1310px"><div><span style="letter-spacing:-0.02px">Magazyn I</span></div></div>
</div>
</div>
<svg class="abs" style="left:1030px;top:110px;pointer-events:none" width="270" height="150" viewBox="1030 110 270 150"><defs><filter id="sh" x="-20%" y="-20%" width="140%" height="150%"><feGaussianBlur in="SourceAlpha" stdDeviation="3.5"/><feOffset dx="-3" dy="5"/><feComponentTransfer><feFuncA type="linear" slope=".4"/></feComponentTransfer><feMerge><feMergeNode/><feMergeNode in="SourceGraphic"/></feMerge></filter></defs><polygon points="1059,132 1087.500,133 1082.500,137 1268.600,233.200 1267.400,234.800 1077.500,149.500 1077,153.500" fill="#92d540" filter="url(#sh)"/></svg>
<div id="sb"><svg class="abs" style="left:5px;top:7px" width="7" height="4" viewBox="0 0 7 4"><path d="M0 4h7L3.500 0z" fill="#a3a3a3"/></svg><i></i><svg class="abs" style="left:5px;top:908px" width="7" height="4" viewBox="0 0 7 4"><path d="M0 0h7L3.500 4z" fill="#505050"/></svg></div>
</body>
</html>
